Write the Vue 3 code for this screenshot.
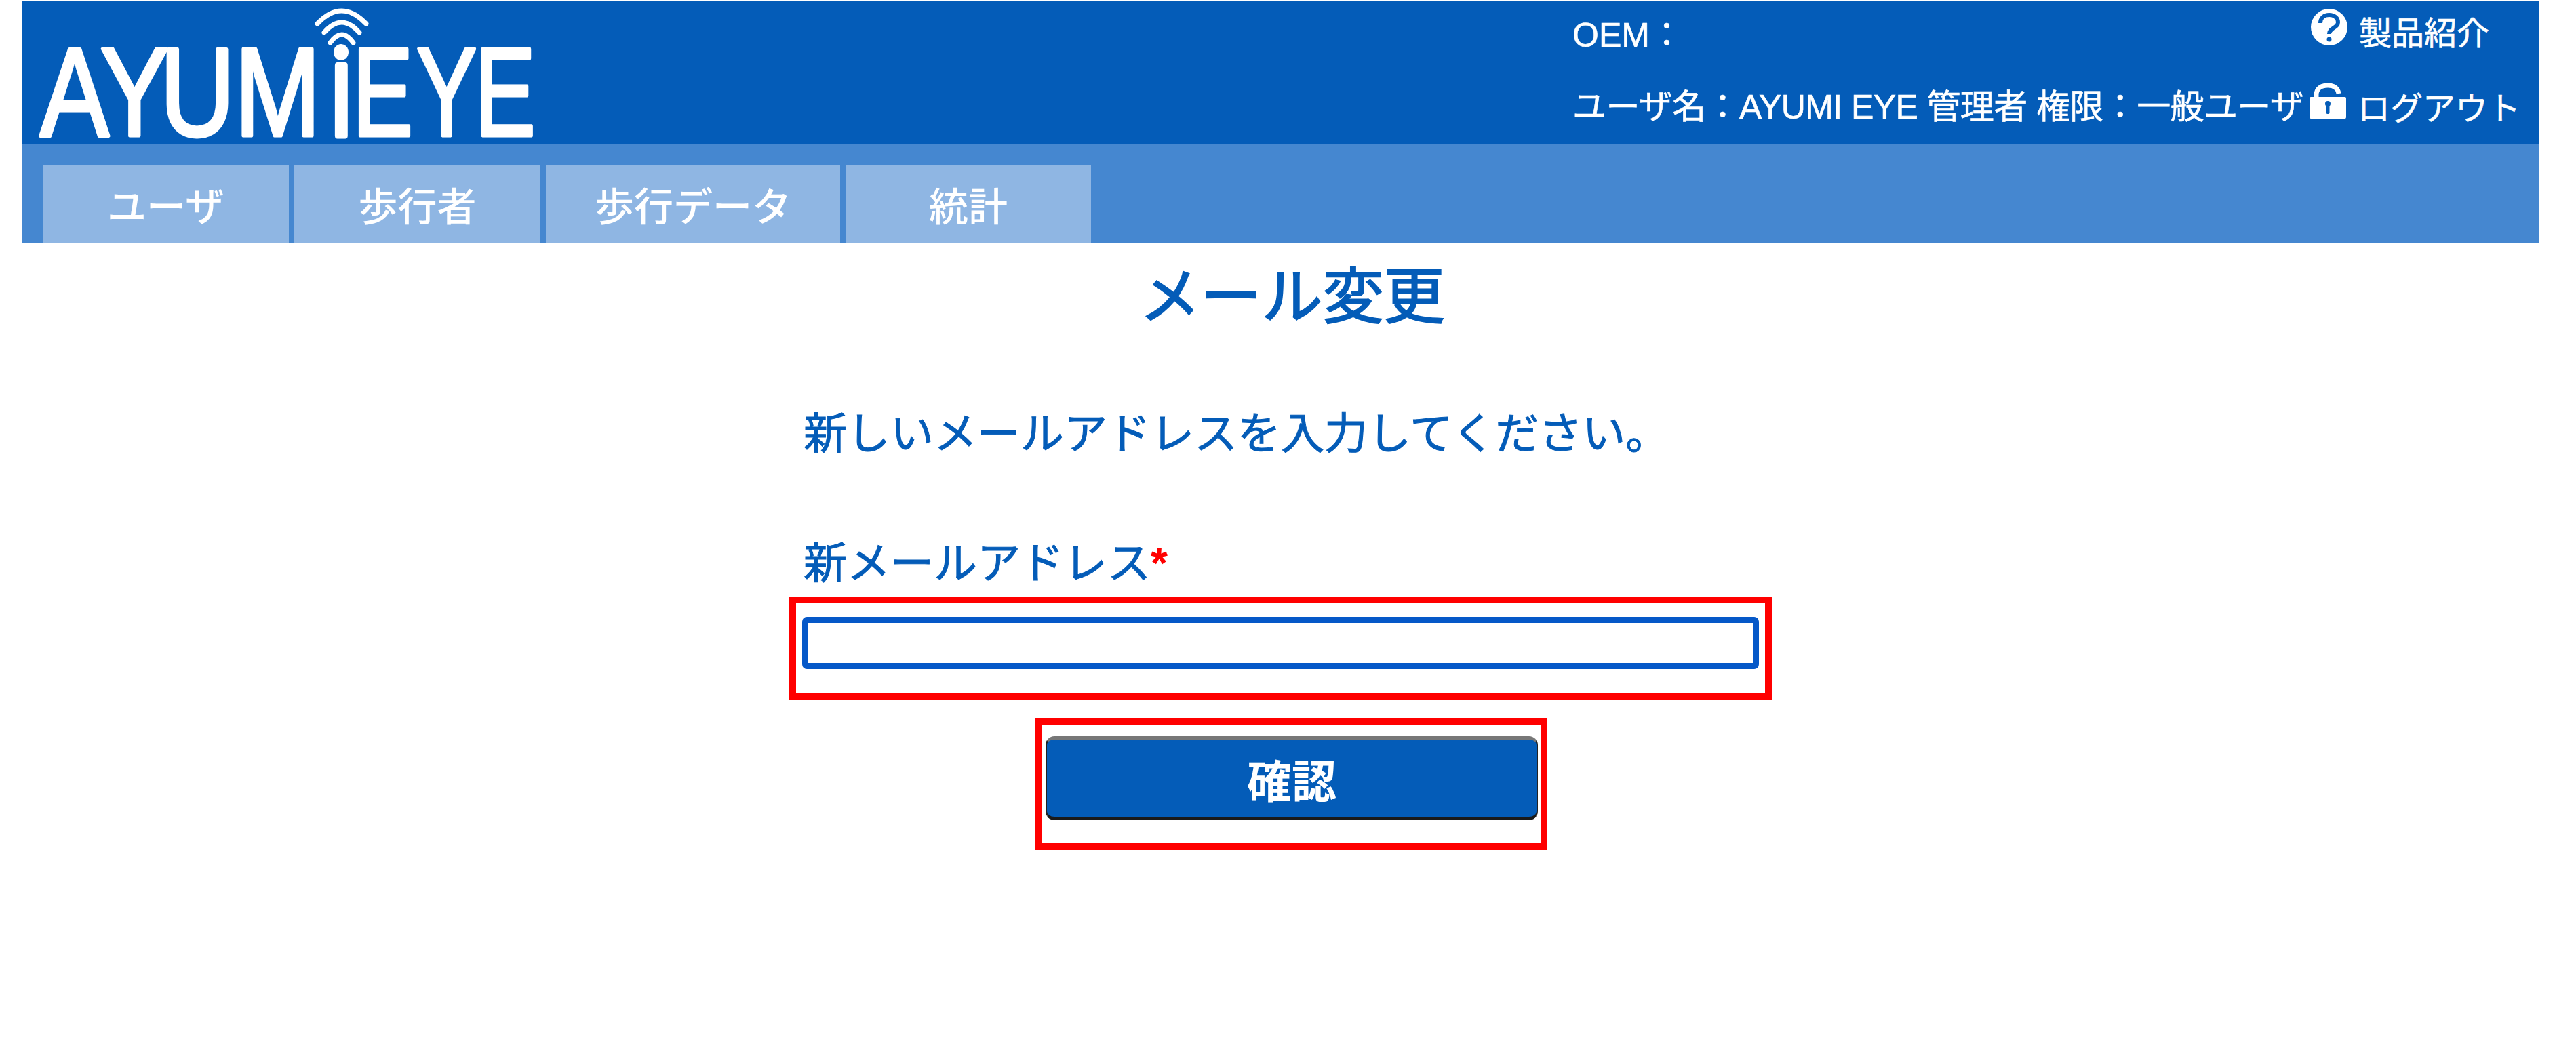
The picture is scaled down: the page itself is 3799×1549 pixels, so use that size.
<script setup>
const tabs = ['ユーザ', '歩行者', '歩行データ', '統計']
const tabWidths = [363, 363, 434, 362]
</script>

<template>
  <div class="page">
    <header class="top">
      <svg class="logo" viewBox="0 0 740 190" width="740" height="190" role="img" aria-label="AYUMI EYE">
        <g fill="none" stroke="#fff" stroke-width="7" stroke-linecap="round">
          <path d="M409 22Q445-16 481 22" />
          <path d="M419 35Q445 5 471 35" />
          <path d="M428 50Q445 26 462 50" />
        </g>
        <text class="logo-type" transform="scale(.82 1)" x="0 108 216 350 521" y="187" font-size="186">AYUM<tspan class="logo-i" font-size="150">I</tspan></text>
        <text class="logo-type" transform="scale(.72 1)" x="640 771 891" y="187" font-size="186">EYE</text>
        <ellipse cx="444" cy="64" rx="11" ry="12" fill="#fff" />
      </svg>
      <div class="account">
        <div class="row row-oem">
          <span>OEM：</span>
          <a class="link">
            <svg class="icon" viewBox="0 0 54 56" width="54" height="56">
              <circle cx="27" cy="28" r="27" fill="#fff" />
              <path d="M14 22C14 14 20 10 27 10S40 14 40 21C40 29 27 29 27 38" fill="none" stroke="#045cb8" stroke-width="6" />
              <circle cx="27" cy="46" r="3.500" fill="#045cb8" />
            </svg>
            <span class="link-text">製品紹介</span>
          </a>
        </div>
        <div class="row row-user">
          <span>ユーザ名：AYUMI EYE 管理者 権限：一般ユーザ</span>
          <a class="link">
            <svg class="icon" viewBox="0 0 54 52" width="54" height="52">
              <path d="M10 22V17C10 7 18 3 27 3s15 4 16 12" fill="none" stroke="#fff" stroke-width="7" />
              <rect x="0" y="20" width="54" height="32" rx="2" fill="#fff" />
              <circle cx="27" cy="30" r="4" fill="#045cb8" />
              <rect x="24.500" y="31" width="5" height="14" rx="2" fill="#045cb8" />
            </svg>
            <span class="link-text link-out">ログアウト</span>
          </a>
        </div>
      </div>
    </header>

    <nav class="nav">
      <a v-for="(tab, i) in tabs" :key="tab" class="tab" :style="{ width: tabWidths[i] + 'px' }">{{ tab }}</a>
    </nav>

    <main class="main">
      <h1 class="title">メール変更</h1>
      <p class="lead">新しいメールアドレスを入力してください。</p>
      <label class="label" for="new-mail">新メールアドレス<span class="req">*</span></label>
      <div class="mark mark-input">
        <input id="new-mail" class="input" type="text" />
      </div>
      <div class="mark mark-btn">
        <button type="button" class="btn">確認</button>
      </div>
    </main>
  </div>
</template>

<style scoped>
.page {
  width: 3799px;
  height: 1549px;
  box-sizing: border-box;
  padding: 1px 54px 0 32px;
  overflow: hidden;
  font-family: "Liberation Sans", "Noto Sans CJK JP", sans-serif;
  color: #045cb8;
  background: #fff;
}

.top {
  height: 212px;
  display: flex;
  justify-content: space-between;
  background: #045cb8;
  color: #fff;
  font-size: 50px;
  -webkit-text-stroke: 0.6px #fff;
}

.logo {
  margin: 12px 0 0 27px;
  overflow: visible;
}

.logo-type {
  font-family: "Liberation Sans", sans-serif;
  fill: #fff;
  stroke: #fff;
  stroke-width: 5px;
  stroke-linejoin: round;
}

.logo-i {
  stroke-width: 9px;
}

.account {
  width: 1426px;
}

.row {
  display: flex;
  align-items: flex-start;
  white-space: nowrap;
}

.row-oem {
  height: 122px;
  padding-top: 11px;
  box-sizing: border-box;
  justify-content: space-between;
  padding-right: 74px;
}

.row-oem > span {
  margin-top: -1px;
}

.row-user > span {
  margin-top: -6px;
  width: 1087px;
  letter-spacing: -0.6px;
}

.link {
  display: flex;
  align-items: flex-start;
}

.icon {
  flex: none;
}

.link-text {
  margin-left: 17px;
  margin-top: -2px;
  font-size: 48px;
}

.link-out {
  margin-top: -2px;
}

.nav {
  height: 145px;
  box-sizing: border-box;
  padding: 31px 0 0 31px;
  display: flex;
  gap: 8px;
  background: #4587d0;
}

.tab {
  display: flex;
  align-items: center;
  justify-content: center;
  background: #8fb6e3;
  color: #fff;
  font-size: 58px;
  font-weight: 500;
}

.main {
  display: flex;
  flex-direction: column;
  align-items: flex-start;
}

.title {
  align-self: stretch;
  margin: 30px 0 0;
  padding-left: 34px;
  text-align: center;
  font-size: 90px;
  font-weight: 400;
  line-height: 100px;
  -webkit-text-stroke: 2px #045cb8;
}

.lead {
  margin: 112px 0 0 1153px;
  font-size: 64px;
  line-height: 80px;
  -webkit-text-stroke: 1px #045cb8;
}

.label {
  margin: 111px 0 0 1153px;
  font-size: 64px;
  line-height: 80px;
  -webkit-text-stroke: 1px #045cb8;
}

.req {
  color: #f00;
  font-weight: 700;
  -webkit-text-stroke: 0;
}

.mark {
  box-sizing: border-box;
  border: 10px solid #f00;
}

.mark-input {
  width: 1449px;
  height: 152px;
  margin: 9px 0 0 1132px;
  padding: 20px 9px;
}

.input {
  display: block;
  width: 100%;
  height: 77px;
  box-sizing: border-box;
  border: 9px solid #0558c8;
  border-radius: 7px;
  background: #fff;
  outline: none;
}

.mark-btn {
  width: 755px;
  height: 195px;
  margin: 27px 0 0 1495px;
  padding: 17px 5px;
}

.btn {
  display: block;
  width: 726px;
  height: 124px;
  box-sizing: border-box;
  border: 2px solid #222;
  border-top: 5px solid #777;
  border-bottom: 5px solid #1a1a1a;
  border-radius: 13px;
  background: #045cb8;
  color: #fff;
  font-family: inherit;
  font-size: 66px;
  font-weight: 700;
}
</style>
